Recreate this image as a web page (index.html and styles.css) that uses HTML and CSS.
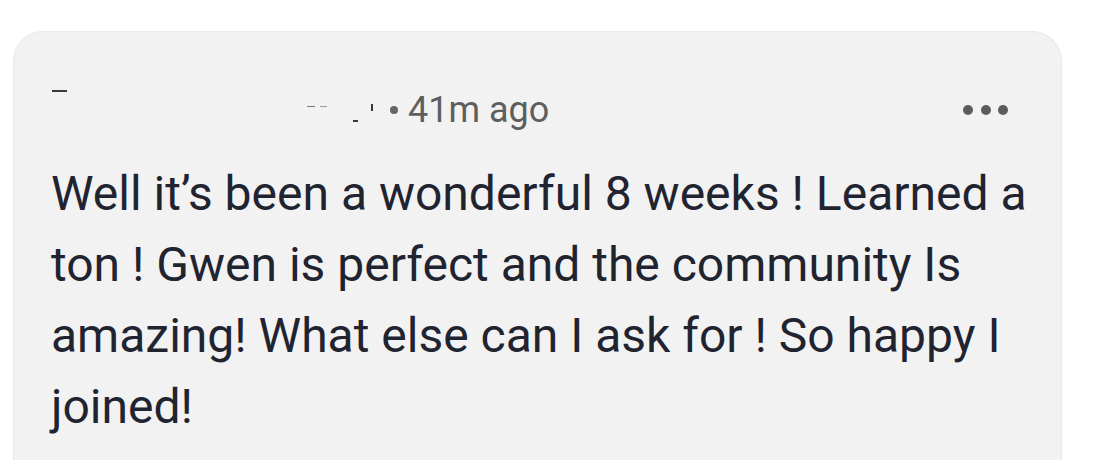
FILE: index.html
```html
<!DOCTYPE html>
<html lang="en">
<head>
<meta charset="utf-8">
<title>Comment</title>
<link rel="stylesheet" href="styles.css">
</head>
<body>
<div class="card">
  <div class="meta">
    <div class="name" aria-label="redacted name">
      <span class="mark m1"></span>
      <span class="mark m2"></span>
      <span class="mark m3"></span>
      <span class="mark m4"></span>
      <span class="mark m5"></span>
    </div>
    <span class="dot-sep"></span>
    <span class="time">41m ago</span>
    <button class="more" aria-label="More options">
      <span></span><span></span><span></span>
    </button>
  </div>
  <p class="body">Well it’s been a wonderful 8 weeks ! Learned a ton ! Gwen is perfect and the community Is amazing! What else can I ask for ! So happy I joined!</p>
</div>
</body>
</html>
```

FILE: styles.css
```css
html, body {
  margin: 0;
  padding: 0;
  background: #ffffff;
}

body {
  font-family: Roboto, "Noto Sans", "Liberation Sans", sans-serif;
  overflow: hidden;
}

.card {
  margin: 31px 37px 0 13px;
  min-height: 520px;
  box-sizing: border-box;
  background: #f2f2f2;
  border: 1px solid #e9e9e9;
  border-bottom: none;
  border-radius: 30px 30px 0 0;
  padding: 53px 20px 0 37px;
}

.meta {
  display: flex;
  align-items: center;
  height: 50px;
  padding-right: 33px;
}

.name {
  position: relative;
  width: 331px;
  height: 50px;
}

.mark {
  position: absolute;
  display: block;
  background: #3a3a3a;
}
.m1 { left: 1px; top: 5px; width: 15px; height: 2px; }
.m2 { left: 256px; top: 21px; width: 8px; height: 1px; background: #777; }
.m3 { left: 269px; top: 21px; width: 7px; height: 1px; background: #999; }
.m4 { left: 320px; top: 19px; width: 2px; height: 7px; }
.m5 { left: 302px; top: 35px; width: 5px; height: 2px; }

.dot-sep {
  width: 8px;
  height: 8px;
  border-radius: 50%;
  background: #666666;
  margin: 0 10px 0 8px;
}

.time {
  font-size: 36px;
  line-height: 50px;
  color: #5e5e5e;
}

.more {
  margin-left: auto;
  display: flex;
  align-items: center;
  gap: 7.5px;
  padding: 0;
  border: none;
  background: none;
}

.more span {
  width: 10px;
  height: 10px;
  border-radius: 50%;
  background: #5c5c5c;
}

.body {
  margin: 23px 0 0;
  font-size: 48px;
  line-height: 71px;
  color: #1f2430;
}
```
